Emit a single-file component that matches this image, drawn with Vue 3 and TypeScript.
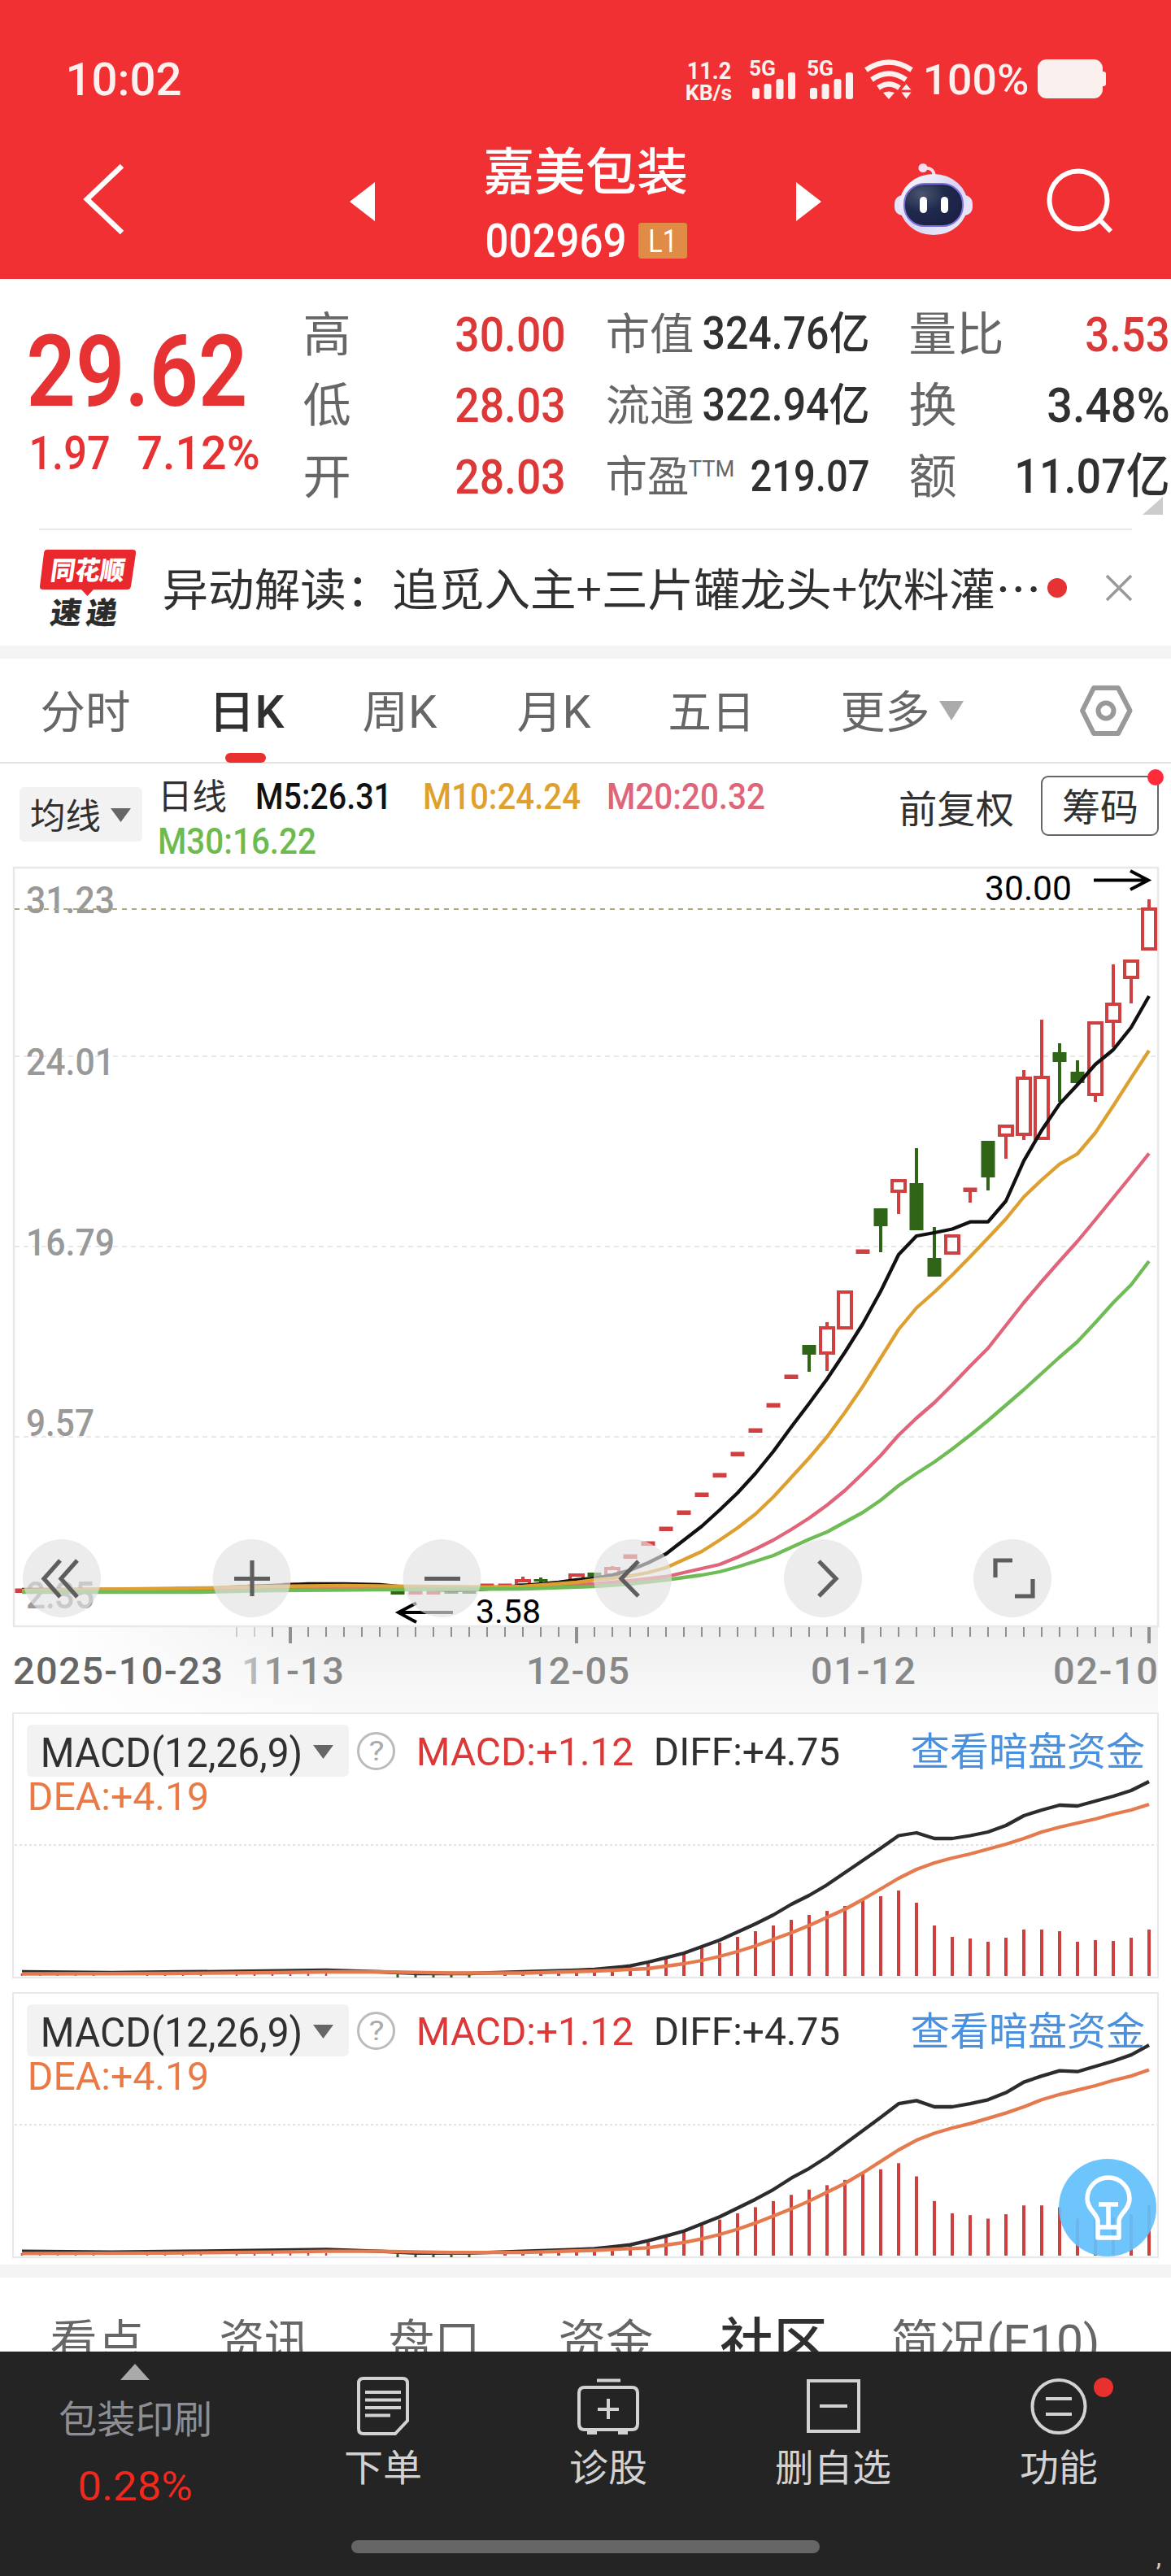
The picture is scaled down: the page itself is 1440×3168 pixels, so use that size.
<script setup lang="ts">
import { h, type FunctionalComponent } from 'vue'

interface FitProps { t: string; w: number; s: number; b?: number }

// A line of real text fitted to an exact ink width; the box is one em high and centred on the glyphs.
const Fit: FunctionalComponent<FitProps> = (p) => {
  const cjk = /^[\u4e00-\u9fff]/.test(p.t)
  const pad = p.s * 0.045
  return h('svg', { width: p.w, height: p.s, class: 'fit' }, [
    h('text', {
      x: -pad,
      y: p.s * (cjk ? 0.885 : 0.86),
      textLength: p.w + pad * 2,
      lengthAdjust: 'spacingAndGlyphs',
      'font-size': p.s,
      'font-weight': p.b ?? 400,
      fill: 'currentColor',
    }, p.t),
  ])
}
Fit.props = ['t', 'w', 's', 'b']

interface Quote { k: string; kw: number; ks: number; v: string; vw: number; vs: number; red?: boolean; sup?: string }
const quotes: Quote[] = [
  { k: '高', kw: 54, ks: 58, v: '30.00', vw: 131, vs: 60, red: true },
  { k: '市值', kw: 104, ks: 53, v: '324.76亿', vw: 201, vs: 55 },
  { k: '量比', kw: 112, ks: 57, v: '3.53', vw: 99, vs: 60, red: true },
  { k: '低', kw: 54, ks: 58, v: '28.03', vw: 131, vs: 60, red: true },
  { k: '流通', kw: 104, ks: 53, v: '322.94亿', vw: 201, vs: 55 },
  { k: '换', kw: 54, ks: 58, v: '3.48%', vw: 146, vs: 59 },
  { k: '开', kw: 54, ks: 58, v: '28.03', vw: 131, vs: 60, red: true },
  { k: '市盈', kw: 98, ks: 53, v: '219.07', vw: 142, vs: 54, sup: 'TTM' },
  { k: '额', kw: 54, ks: 58, v: '11.07亿', vw: 186, vs: 59 },
]

const periods = [
  { t: '分时', w: 106, gap: 52 },
  { t: '日K', w: 88, gap: 101, on: true },
  { t: '周K', w: 87, gap: 101 },
  { t: '月K', w: 86, gap: 103 },
  { t: '五日', w: 102, gap: 100 },
  { t: '更多', w: 105, gap: 110 },
]

const X = (i: number) => 27 + 22 * i
type P = [number, number]
const path = (pts: P[], map: (y: number) => number = (y) => y) =>
  pts.map(([i, y]) => `${X(i)},${map(y).toFixed(1)}`).join(' ')

// Candles: index, colour, body top, body bottom, high, low
type Candle = [number, 'r' | 'g', number, number, number, number]
const candles: Candle[] = [
  [28, 'r', 1942, 1951, 1939, 1951], [29, 'g', 1942, 1945, 1940, 1948], [31, 'r', 1935, 1948, 1935, 1948],
  [32, 'g', 1934, 1939, 1934, 1939], [33, 'r', 1927, 1939, 1926, 1939],
  [44, 'g', 1654, 1666, 1654, 1687], [45, 'r', 1631, 1666, 1626, 1686], [46, 'r', 1587, 1635, 1587, 1635],
  [48, 'g', 1486, 1508, 1486, 1540], [49, 'r', 1450, 1467, 1450, 1493], [50, 'g', 1455, 1513, 1412, 1513],
  [51, 'g', 1547, 1570, 1509, 1570], [52, 'r', 1518, 1543, 1518, 1543], [54, 'g', 1403, 1448, 1403, 1464],
  [55, 'r', 1383, 1398, 1383, 1425], [56, 'r', 1324, 1397, 1316, 1402], [57, 'r', 1323, 1402, 1254, 1402],
  [58, 'g', 1294, 1306, 1283, 1355], [59, 'g', 1318, 1332, 1304, 1334], [60, 'r', 1256, 1348, 1256, 1355],
  [61, 'r', 1233, 1258, 1186, 1288], [62, 'r', 1180, 1204, 1180, 1234], [63, 'r', 1116, 1169, 1106, 1169],
]
const dashes: [number, number, string][] = [
  [0, 1956, 'r'], [5, 1957, 'r'], [9, 1954, 'r'], [12, 1952, 'r'], [13, 1951, 'r'], [15, 1949, 'r'],
  [21, 1958, 'g'], [22, 1958, 'r'], [23, 1958, 'r'], [24, 1957, 'g'], [25, 1957, 'g'], [26, 1950, 'r'], [27, 1950, 'r'],
  [34, 1914, 'r'], [35, 1898, 'r'], [36, 1880, 'r'], [37, 1860, 'r'], [38, 1838, 'r'], [39, 1814, 'r'], [40, 1788, 'r'],
  [41, 1759, 'r'], [42, 1728, 'r'], [43, 1693, 'r'], [47, 1539, 'r'], [53, 1463, 'r'],
]
const ma5: P[] = [[0, 1955], [9, 1955], [11, 1953], [14, 1950], [16, 1948], [18, 1948], [20, 1949], [22, 1953], [24, 1956], [26, 1954], [27, 1952], [28, 1950], [29, 1948], [30, 1946], [31, 1943], [32, 1941], [33, 1937], [34, 1931], [35, 1922], [36, 1911], [37, 1894], [38, 1877], [39, 1857], [40, 1836], [41, 1812], [42, 1785], [43, 1755], [44, 1726], [45, 1696], [46, 1663], [47, 1628], [48, 1588], [49, 1543], [50, 1520], [51, 1516], [52, 1511.5], [53, 1502.7], [54, 1502.7], [55, 1477], [56, 1427.6], [57, 1390], [58, 1357.6], [59, 1334], [60, 1309], [61, 1291], [62, 1263.5], [63, 1225]]
const ma10: P[] = [[0, 1956], [10, 1953], [14, 1951], [18, 1950], [22, 1951], [26, 1952], [28, 1951], [31, 1946], [32, 1943], [33, 1941], [34, 1938], [35, 1934], [36, 1928], [37, 1918], [38, 1908], [39, 1894], [40, 1879], [41, 1862], [42, 1841], [43, 1817], [44, 1793], [45, 1767], [46, 1737], [47, 1705], [48, 1670], [49, 1635], [50, 1608.5], [51, 1589], [52, 1568], [53, 1545.5], [54, 1522.5], [55, 1499], [56, 1472], [57, 1451], [58, 1431.6], [59, 1419], [60, 1393], [61, 1360], [62, 1325.6], [63, 1292]]
const ma20: P[] = [[0, 1956], [14, 1953], [20, 1952], [28, 1952], [32, 1948], [34, 1944], [36, 1939], [38, 1929], [39, 1924], [40, 1915], [41, 1905], [42, 1894], [43, 1881], [44, 1867], [45, 1851], [46, 1833], [47, 1812], [48, 1790], [49, 1765], [50, 1744], [51, 1725], [52, 1703], [53, 1680], [54, 1658], [55, 1630], [56, 1602], [57, 1576], [58, 1551], [59, 1526.5], [60, 1500], [61, 1473], [62, 1446], [63, 1418.5]]
const ma30: P[] = [[0, 1958], [10, 1958], [14, 1956], [20, 1955], [28, 1954], [32, 1951], [34, 1948], [36, 1943], [38, 1937], [39, 1933], [40, 1927], [41, 1920], [42, 1913], [43, 1903], [44, 1893], [45, 1884], [46, 1872], [47, 1860], [48, 1845], [49, 1827], [50, 1812], [51, 1798], [52, 1782], [53, 1765], [54, 1747], [55, 1728], [56, 1709], [57, 1689], [58, 1669], [59, 1650], [60, 1626.5], [61, 1602], [62, 1580], [63, 1551]]

const levels = [
  { t: '31.23', y: 1123, w: 109 }, { t: '24.01', y: 1322, w: 109 }, { t: '16.79', y: 1544, w: 109 },
  { t: '9.57', y: 1766, w: 84 }, { t: '2.35', y: 1978, w: 84 },
]
const ticks = Array.from({ length: 52 }, (_, k) => k + 12)
const isMajor = (i: number) => i % 16 === 15
const dates = [
  { t: '2025-10-23', x: 16, w: 258, c: '#666' }, { t: '11-13', x: 297, w: 126, c: 'url(#fadeDate)' },
  { t: '12-05', x: 647, w: 127, c: '#888' }, { t: '01-12', x: 997, w: 129, c: '#888' }, { t: '02-10', x: 1295, w: 129, c: '#888' },
]
const tools = [
  { x: 76, d: 'M74 1919 54 1941.500 74 1964M95 1919 75 1941.500 95 1964' },
  { x: 309.5, d: 'M288 1941.500H332M310 1919V1963' },
  { x: 543.5, d: 'M522 1941.500H566' },
  { x: 778, d: 'M785 1920 764 1941.500 785 1963' },
  { x: 1012, d: 'M1007 1920 1028 1941.500 1007 1963' },
  { x: 1245, d: 'M1224 1940V1919H1245M1270 1942V1963H1248' },
]

// MACD series, in pixels above the zero line
const diff: P[] = [[0, 5], [5, 4], [9, 5], [12, 5.5], [17, 7], [20, 5], [22, 3], [25, 3], [28, 5], [31, 7], [32, 8], [33, 10], [34, 12.3], [35, 17], [36, 22.3], [37, 28], [38, 36], [39, 44], [40, 54], [41, 64], [42, 75], [43, 88], [44, 99], [45, 112], [46, 127], [47, 142], [48, 157], [49, 172.5], [50, 176], [51, 169], [52, 169], [53, 172.5], [54, 177], [55, 185], [56, 197], [57, 204], [58, 210], [59, 209], [60, 215], [61, 221], [62, 228], [63, 239]]
const dea: P[] = [[0, 2.5], [8, 3], [14, 4], [17, 5], [20, 5], [24, 3.5], [28, 3.5], [32, 6], [33, 7], [34, 8], [35, 9], [36, 12], [37, 15], [38, 19], [39, 24], [40, 30], [41, 37], [42, 45], [43, 53], [44, 62], [45, 72], [46, 82], [47, 94], [48, 107], [49, 120], [50, 131], [51, 139], [52, 145], [53, 150], [54, 156], [55, 162], [56, 169], [57, 177], [58, 183], [59, 188], [60, 193], [61, 199], [62, 204], [63, 211]]
const bars = [2.5, 3, 4, 4, 5, 6, 8, 11, 15, 21, 27, 35, 41, 48, 55, 62, 69, 75, 80, 86, 93, 98, 105, 90, 62, 48, 46, 42, 47, 57, 57, 55, 42, 44, 43, 47, 57]
const panels = [{ k: 1 }, { k: 1.083 }]

const bottomTabs = [
  { t: '看点', w: 111, gap: 64 }, { t: '资讯', w: 106, gap: 97 }, { t: '盘口', w: 108, gap: 102 },
  { t: '资金', w: 112, gap: 101 }, { t: '社区', w: 127, gap: 87, on: true }, { t: '简况(F10)', w: 252, gap: 83 },
]
</script>

<template>
  <div class="page">
    <header class="head">
      <div class="status">
        <Fit class="clock" t="10:02" :w="138" :s="56" :b="500" />
        <div class="rate">
          <Fit t="11.2" :w="52" :s="29" :b="700" />
          <Fit t="KB/s" :w="55" :s="26" :b="700" />
        </div>
        <svg class="signal" width="206" height="62" viewBox="920 66 206 62" fill="currentColor">
          <g v-for="o in [0, 71]" :key="o" :transform="`translate(${o} 0)`">
            <text x="922" y="93" font-size="26" font-weight="700" textLength="33" lengthAdjust="spacingAndGlyphs">5G</text>
            <rect x="926" y="108" width="9" height="14" rx="3" /><rect x="940.500" y="103" width="9" height="19" rx="3" />
            <rect x="955.500" y="97" width="9" height="25" rx="3" /><rect x="970" y="89" width="9" height="33" rx="3" />
          </g>
          <g fill="none" stroke="currentColor" stroke-width="6.500">
            <path d="M1066 86Q1094 67 1122 86" /><path d="M1073 98Q1094 83 1115 98" /><path d="M1081 108Q1094 99 1107 108" />
          </g>
          <path d="M1087 114Q1094 111 1101 114L1094 122ZM1109.500 110.500 1115.500 103.500 1121.500 110.500ZM1109.500 113.500H1121.500L1115.500 121.500Z" />
        </svg>
        <Fit class="pct" t="100%" :w="126" :s="52" :b="500" />
        <i class="battery" />
      </div>
      <div class="nav">
        <svg class="back" width="52" height="88" fill="none" stroke="#fff" stroke-width="6.500"><path d="M49 3 6 44 49 85" /></svg>
        <svg class="prev" width="31" height="48"><path d="M31 0V48L0 24Z" fill="#fff" /></svg>
        <div class="title">
          <Fit t="嘉美包装" :w="246" :s="62" :b="500" />
          <div class="code">
            <Fit t="002969" :w="169" :s="57" :b="500" />
            <span class="level"><Fit t="L1" :w="32" :s="38" /></span>
          </div>
        </div>
        <svg class="next" width="31" height="48"><path d="M0 0V48L31 24Z" fill="#fff" /></svg>
        <svg class="robot" width="98" height="90" viewBox="1099 199 98 90">
          <defs>
            <linearGradient id="shell" x1="0" y1="0" x2="1" y2="1"><stop offset="0" stop-color="#fff" /><stop offset=".5" stop-color="#d9d6f5" /><stop offset="1" stop-color="#eef0ff" /></linearGradient>
            <radialGradient id="visor" cx=".3" cy=".25" r=".8"><stop offset="0" stop-color="#4c5670" /><stop offset=".5" stop-color="#202a4c" /><stop offset="1" stop-color="#1a2145" /></radialGradient>
          </defs>
          <path d="M1136 206Q1148 204 1149 216" fill="none" stroke="#f3dcea" stroke-width="4" />
          <circle cx="1135" cy="205.500" r="5.500" fill="#f2dff0" />
          <rect x="1100" y="239" width="96" height="25" rx="10" fill="#e6e2fa" />
          <ellipse cx="1148" cy="250.500" rx="42" ry="37.500" fill="url(#shell)" />
          <rect x="1112" y="225" width="72" height="52" rx="25" fill="url(#visor)" stroke="#7d70dc" stroke-width="2" />
          <rect x="1131" y="241" width="9" height="20" rx="4.500" fill="#fff" /><rect x="1157" y="241" width="9" height="20" rx="4.500" fill="#fff" />
        </svg>
        <svg class="search" width="82" height="80" viewBox="1287 207 82 80" fill="none" stroke="#fff" stroke-width="6"><circle cx="1326" cy="246" r="35.500" /><path d="M1352 270 1366 284.500" /></svg>
      </div>
    </header>

    <section class="quote">
      <div class="price">
        <Fit t="29.62" :w="261" :s="122" :b="600" />
        <div class="change"><Fit t="1.97" :w="95" :s="58" :b="500" /><Fit t="7.12%" :w="146" :s="58" :b="500" /></div>
      </div>
      <div class="grid">
        <div v-for="q in quotes" :key="q.k" class="cell">
          <span class="key"><Fit :t="q.k" :w="q.kw" :s="q.ks" /><Fit v-if="q.sup" class="sup" :t="q.sup" :w="54" :s="28" /></span>
          <Fit :class="{ red: q.red }" :t="q.v" :w="q.vw" :s="q.vs" :b="500" />
        </div>
      </div>
      <i class="fold" />
    </section>

    <section class="news">
      <svg class="brand" width="120" height="98" viewBox="48 672 120 98">
        <path d="M58 674H163Q168 674 167 679L161 719Q160.500 723 156 723H115L107.500 731 100 723H53Q48.500 723 49 719L54 678Q54.500 674 58 674Z" fill="#e8282c" />
        <g transform="skewX(-8)" font-weight="900">
          <text x="161" y="711.500" font-size="32" textLength="91" lengthAdjust="spacingAndGlyphs" fill="#fff">同花顺</text>
          <text x="168" y="765" font-size="37" textLength="38" lengthAdjust="spacingAndGlyphs" fill="#2c2c2c">速</text>
          <text x="212" y="765" font-size="37" textLength="38" lengthAdjust="spacingAndGlyphs" fill="#2c2c2c">递</text>
        </g>
      </svg>
      <Fit class="headline" t="异动解读：追觅入主+三片罐龙头+饮料灌…" :w="1076" :s="55" />
      <i class="dot" />
      <svg class="close" width="32" height="32" stroke="#999" stroke-width="3.500"><path d="M1 1 31 31M31 1 1 31" /></svg>
    </section>

    <nav class="periods">
      <div v-for="p in periods" :key="p.t" class="period" :class="{ on: p.on }" :style="{ marginLeft: p.gap + 'px' }">
        <Fit :t="p.t" :w="p.w" :s="55" :b="p.on ? 500 : 400" />
      </div>
      <svg class="more" width="30" height="24"><path d="M0 0H30L15 24Z" fill="#aaa" /></svg>
      <svg class="gear" width="64" height="62" viewBox="1328 843 64 62" fill="none" stroke="#999" stroke-width="6" stroke-linejoin="round"><path d="M1345 846H1375L1389.500 874 1375 902H1345L1331 874Z" /><circle cx="1360" cy="874" r="9.500" /></svg>
    </nav>

    <div class="legend">
      <span class="chip ma"><Fit t="均线" :w="83" :s="43" /><svg width="25" height="17"><path d="M0 0H25L12.500 17Z" fill="#666" /></svg></span>
      <div class="values">
        <Fit class="day" t="日线" :w="81" :s="43" /><Fit class="m5" t="M5:26.31" :w="164" :s="44" :b="500" />
        <Fit class="m10" t="M10:24.24" :w="190" :s="44" :b="500" /><Fit class="m20" t="M20:20.32" :w="191" :s="44" :b="500" />
        <Fit class="m30" t="M30:16.22" :w="191" :s="44" :b="500" />
      </div>
      <Fit class="adjust" t="前复权" :w="138" :s="47" />
      <span class="chips"><Fit t="筹码" :w="90" :s="46" /><i /></span>
    </div>

    <svg class="chart" width="1440" height="1040" viewBox="0 1066 1440 1040">
      <defs>
        <linearGradient id="axis" x1="0" y1="0" x2="0" y2="1"><stop offset="0" stop-color="#eee" /><stop offset="1" stop-color="#fafafa" /></linearGradient>
        <linearGradient id="veil" x1="0" y1="0" x2="1" y2="0"><stop offset=".15" stop-color="#fff" /><stop offset="1" stop-color="#fff" stop-opacity="0" /></linearGradient>
        <linearGradient id="fadeDate" x1="0" y1="0" x2="1" y2="0"><stop offset="0" stop-color="#ccc" /><stop offset=".4" stop-color="#888" /></linearGradient>
      </defs>
      <rect x="0" y="2000" width="1424" height="106" fill="url(#axis)" /><rect x="0" y="2000" width="420" height="106" fill="url(#veil)" />
      <rect x="17" y="1067" width="1407" height="933" fill="#fff" stroke="#e8e8e8" stroke-width="2.500" />
      <path d="M18 1299H1423M18 1533H1423M18 1767H1423" stroke="#e8e8e8" stroke-width="2" stroke-dasharray="6 5" />
      <text v-for="l in levels" :key="l.t" x="32" :y="l.y" font-size="47" font-weight="500" fill="#999" :textLength="l.w" lengthAdjust="spacingAndGlyphs">{{ l.t }}</text>
      <path d="M18 1118H1403" stroke="#b0a880" stroke-width="2" stroke-dasharray="6 6" />
      <g v-for="[i, y, c] in dashes" :key="'d' + i"><rect :x="X(i) - 8.5" :y="y - 2.5" width="17" height="5.500" :fill="c === 'r' ? '#d14041' : '#306416'" /></g>
      <path :d="`M${X(53)} 1463V1479`" stroke="#d14041" stroke-width="4" />
      <g v-for="[i, c, t, b, hi, lo] in candles" :key="i">
        <path :d="`M${X(i)} ${hi}V${t}M${X(i)} ${b}V${lo}`" :stroke="c === 'r' ? '#d14041' : '#306416'" stroke-width="4" />
        <rect v-if="c === 'r'" :x="X(i) - 8" :y="t + 2" width="16" :height="b - t - 4" fill="#fff" stroke="#d14041" stroke-width="4" />
        <rect v-else :x="X(i) - 8.5" :y="t" width="17" :height="b - t" fill="#306416" />
      </g>
      <g fill="none" stroke-width="4.300" stroke-linejoin="round">
        <polyline :points="path(ma5)" stroke="#111" /><polyline :points="path(ma20)" stroke="#e0647a" />
        <polyline :points="path(ma10)" stroke="#dda030" /><polyline :points="path(ma30)" stroke="#6fbb55" />
      </g>
      <g fill="none" stroke="#000" stroke-width="4"><path d="M1345 1082.500H1412M1390 1071 1412 1082.500 1390 1094" /><path d="M557 1983H491M512 1971.500 490 1983 512 1995" /></g>
      <text x="1211" y="1107" font-size="42" textLength="107" lengthAdjust="spacingAndGlyphs">30.00</text>
      <text x="585" y="1996" font-size="41" textLength="80" lengthAdjust="spacingAndGlyphs">3.58</text>
      <g v-for="b in tools" :key="b.x"><circle :cx="b.x" cy="1941" r="48" fill="#e2e2e2" fill-opacity=".66" /><path :d="b.d" fill="none" stroke="#5e5e5e" stroke-width="5.200" /></g>
      <path v-for="i in ticks" :key="'t' + i" :d="`M${X(i)} 2001V${isMajor(i) ? 2021 : 2013}`" :stroke="i < 14 ? '#ccc' : '#909090'" :stroke-width="isMajor(i) ? 4 : 2" />
      <text v-for="d in dates" :key="d.t" :x="d.x" y="2071" font-size="47" font-weight="500" :fill="d.c" :textLength="d.w" lengthAdjust="spacing">{{ d.t }}</text>
    </svg>

    <section v-for="(p, n) in panels" :key="n" class="macd">
      <svg class="plot" width="1408" height="326" viewBox="16 0 1408 326">
        <path d="M18 163H1423" stroke="#e4e4e4" stroke-width="2" stroke-dasharray="3 3" />
        <path v-for="(b, k) in bars" :key="k" :d="`M${X(k + 27)} 324V${324 - b * p.k}`" stroke="#cf3f3d" stroke-width="4" />
        <path v-for="k in [0, 1, 2, 3, 4, 7, 8, 9, 10, 12, 13, 14, 15, 16, 17]" :key="'s' + k" :d="`M${X(k)} 324v-3`" stroke="#cf3f3d" stroke-width="2.500" />
        <path v-for="k in [21, 22, 23, 24, 25]" :key="'g' + k" :d="`M${X(k)} 322v4`" stroke="#306416" stroke-width="3" />
        <g fill="none" stroke-width="4.300" stroke-linejoin="round">
          <polyline :points="path(diff, (y) => 324 - y * p.k)" stroke="#2c2c2e" /><polyline :points="path(dea, (y) => 324 - y * p.k)" stroke="#e57a4e" />
        </g>
      </svg>
      <div class="info">
        <span class="chip ind"><Fit t="MACD(12,26,9)" :w="318" :s="50" /><svg width="25" height="17"><path d="M0 0H25L12.500 17Z" fill="#666" /></svg></span>
        <span class="help"><Fit t="?" :w="16" :s="34" /></span>
        <Fit class="red" t="MACD:+1.12" :w="263" :s="49" :b="450" />
        <Fit class="diff" t="DIFF:+4.75" :w="225" :s="49" :b="450" />
        <Fit class="link" t="查看暗盘资金" :w="284" :s="48" />
      </div>
      <Fit class="dea" t="DEA:+4.19" :w="219" :s="49" :b="450" />
      <svg v-if="n === 1" class="tip" width="120" height="120" viewBox="0 0 120 120" fill="none">
        <circle cx="60" cy="60" r="60" fill="#62c0fc" fill-opacity=".92" />
        <g stroke="#fff" stroke-width="5.500" stroke-linejoin="round"><path d="M48 76C47 67 35 62 35 49A26 26 0 0 1 87 49C87 62 75 67 74 76V97H48ZM48 84H74M49 56H73M61 57V83" /></g>
      </svg>
    </section>

    <nav class="sections">
      <div v-for="t in bottomTabs" :key="t.t" :class="{ on: t.on }" :style="{ marginLeft: t.gap + 'px' }"><Fit :t="t.t" :w="t.w" :s="t.on ? 64 : 57" :b="t.on ? 500 : 400" /></div>
    </nav>

    <footer class="dock">
      <div class="sector">
        <svg width="36" height="20"><path d="M18 0 36 20H0Z" fill="#aaa" /></svg>
        <Fit class="name" t="包装印刷" :w="185" :s="47" />
        <Fit class="gain" t="0.28%" :w="137" :s="50" />
      </div>
      <div class="act">
        <svg width="76" height="72" viewBox="0 0 76 72"><path d="M14 2H62Q68 2 68 8V54L53 70H14Q8 70 8 64V8Q8 2 14 2ZM16 19H60M16 28.500H60M16 38H60M16 47.500H47" /></svg>
        <Fit t="下单" :w="92" :s="46" />
      </div>
      <div class="act">
        <svg width="76" height="72" viewBox="0 0 76 72"><path d="M24 4.500H53M9 13H67Q74 13 74 20V58Q74 65 67 65H9Q2 65 2 58V20Q2 13 9 13ZM38 27V52M25 40H51M12 69H24M50 69H62" /></svg>
        <Fit t="诊股" :w="92" :s="46" />
      </div>
      <div class="act">
        <svg width="76" height="72" viewBox="0 0 76 72"><path d="M7 5H69V67H7ZM21 36H55" /></svg>
        <Fit t="删自选" :w="139" :s="46" />
      </div>
      <div class="act">
        <svg width="76" height="72" viewBox="0 0 76 72"><circle cx="38" cy="36.500" r="32.500" /><path d="M22 27H54M22 46H54" /></svg>
        <Fit t="功能" :w="92" :s="46" /><i />
      </div>
      <b class="home" />
      <span class="comma">,</span>
    </footer>
  </div>
</template>

<style>
body { margin: 0; background: #fff; }
</style>

<style scoped>
.page { width: 1440px; height: 3168px; overflow: hidden; display: flex; flex-direction: column; background: #fff; color: #303030; font-family: Roboto, "Noto Sans CJK SC", sans-serif; }
.page > * { flex: none; box-sizing: border-box; }
svg { display: block; flex: none; overflow: visible; }
i { display: block; flex: none; }
.red { color: #dc3838; }

.head { height: 343px; background: #f13034; color: #fff; }
.status { height: 106px; padding: 44px 80px 0 83px; display: flex; align-items: center; color: #fcf1ef; }
.rate { display: flex; flex-direction: column; align-items: center; margin: 4px 20px 0 auto; }
.pct { margin: 0 13px 0 12px; }
.battery { width: 80px; height: 48px; border-radius: 11px; background: #faf0ee; position: relative; margin-right: 4px; }
.battery::after { content: ""; position: absolute; left: 80px; top: 15px; width: 4px; height: 18px; background: #faf0ee; border-radius: 0 3px 3px 0; }
.nav { height: 189px; padding-left: 101px; display: flex; align-items: center; }
.prev { margin-left: 277px; margin-top: 7px; }
.title { width: 248px; margin: 14px 134px 0 136px; display: flex; flex-direction: column; gap: 26px; }
.code { display: flex; align-items: center; justify-content: space-between; padding-left: 2px; }
.level { width: 60px; height: 44px; border-radius: 4px; background: #e18c46; display: flex; align-items: center; justify-content: center; }
.next { margin: 7px 89px 0 0; }
.robot { margin-right: 90px; }
.search { margin-top: 4px; }

.quote { height: 307px; display: flex; position: relative; }
.price { width: 337px; padding: 51px 0 0 38px; color: #e63232; }
.change { display: flex; justify-content: space-between; width: 279px; margin-top: 11px; }
.grid { margin-top: 23px; height: 262px; display: grid; grid-template-columns: 318px 320px 316px; grid-template-rows: repeat(3, 87.5px); column-gap: 53.5px; }
.cell { display: flex; justify-content: space-between; align-items: center; }
.key { display: flex; color: #666; }
.sup { margin: 4px 0 0 3px; }
.fold { position: absolute; right: 10px; top: 268px; width: 25px; height: 22px; background: #ccc; clip-path: polygon(100% 0, 100% 100%, 0 100%); }

.news { height: 144px; margin: 0 48px; border-top: 2px solid #e9e9e9; display: flex; align-items: center; }
.headline { margin-left: 34px; font-family: "Noto Sans CJK SC", sans-serif; }
.dot { width: 24px; height: 24px; border-radius: 50%; background: #e63232; margin-left: 10px; }
.close { margin-left: auto; }

.periods { height: 145px; border-top: 16px solid #f4f4f4; border-bottom: 2px solid #e2e2e2; display: flex; align-items: center; color: #666; }
.period { position: relative; }
.on { color: #303030; }
.period.on::after { content: ""; position: absolute; left: 18px; top: 80px; width: 50px; height: 12px; border-radius: 6px; background: #e8302f; }
.more { margin-left: 14px; }
.gear { margin: 0 48px 0 auto; }

.legend { height: 127px; display: flex; align-items: flex-start; padding: 15px 15px 0 24px; }
.chip { display: flex; align-items: center; justify-content: space-between; background: #f2f2f2; border-radius: 6px; box-sizing: border-box; }
.ma { width: 151px; height: 67px; padding: 2px 14px 0 15px; margin-top: 14px; }
.values { width: 780px; margin: 3px 0 0 21px; display: flex; flex-wrap: wrap; row-gap: 11px; }
.m5 { margin-left: 39px; color: #111; }
.m10 { margin-left: 42px; color: #dfa12b; }
.m20 { margin-left: 36px; color: #e0647a; }
.m30 { color: #6dba4e; }
.adjust { margin: 16px 0 0 auto; }
.chips { position: relative; width: 145px; height: 74px; margin-left: 35px; border: 2px solid #666; border-radius: 9px; display: flex; align-items: center; justify-content: center; box-sizing: border-box; }
.chips i { position: absolute; right: -8px; top: -10px; width: 20px; height: 20px; border-radius: 50%; background: #ff2b3a; }

.macd { width: 1410px; height: 327px; margin: 0 0 17px 15px; border: 2px solid #e8e8e8; position: relative; background: #fff; }
.macd .plot { position: absolute; left: -1px; top: -2px; z-index: 0; }
.info { position: relative; display: flex; align-items: center; margin: 13px 0 0 16px; height: 64px; }
.ind { width: 396px; height: 64px; padding: 3px 19px 0 19px; }
.help { width: 47px; height: 47px; box-sizing: border-box; border: 3px solid #bbb; border-radius: 50%; margin: 0 28px 0 10px; color: #aaa; display: flex; align-items: center; justify-content: center; }
.diff { margin-left: 29px; }
.link { margin-left: 91px; color: #4a90dc; }
.dea { position: relative; margin: -1px 0 0 19px; color: #e97a45; }
.tip { position: absolute; left: 1285px; top: 203px; }

.sections { height: 107px; margin-top: -9px; border-top: 16px solid #f4f4f4; display: flex; align-items: center; overflow: hidden; color: #666; padding-top: 63px; }
.sections > div { flex: none; }

.dock { flex: none; height: 276px; background: #242424; color: #d2d2d2; position: relative; display: flex; }
.sector { width: 332px; display: flex; flex-direction: column; align-items: center; padding-top: 15px; }
.name { color: #8d8d94; margin-top: 23px; }
.gain { color: #f0281e; margin-top: 35px; }
.act { position: relative; width: 277px; display: flex; flex-direction: column; align-items: center; padding-top: 31px; gap: 15px; }
.dock > div { flex: none; box-sizing: border-box; }
.act > svg:first-child { fill: none; stroke: #d2d2d2; stroke-width: 4; }
.act i { position: absolute; left: 182px; top: 32px; width: 24px; height: 24px; border-radius: 50%; background: #e8302f; }
.home { position: absolute; left: 432px; top: 232px; width: 576px; height: 16px; border-radius: 8px; background: #666; }
.comma { position: absolute; right: 12px; bottom: 8px; font-size: 32px; line-height: 32px; color: #ccc; }
</style>
